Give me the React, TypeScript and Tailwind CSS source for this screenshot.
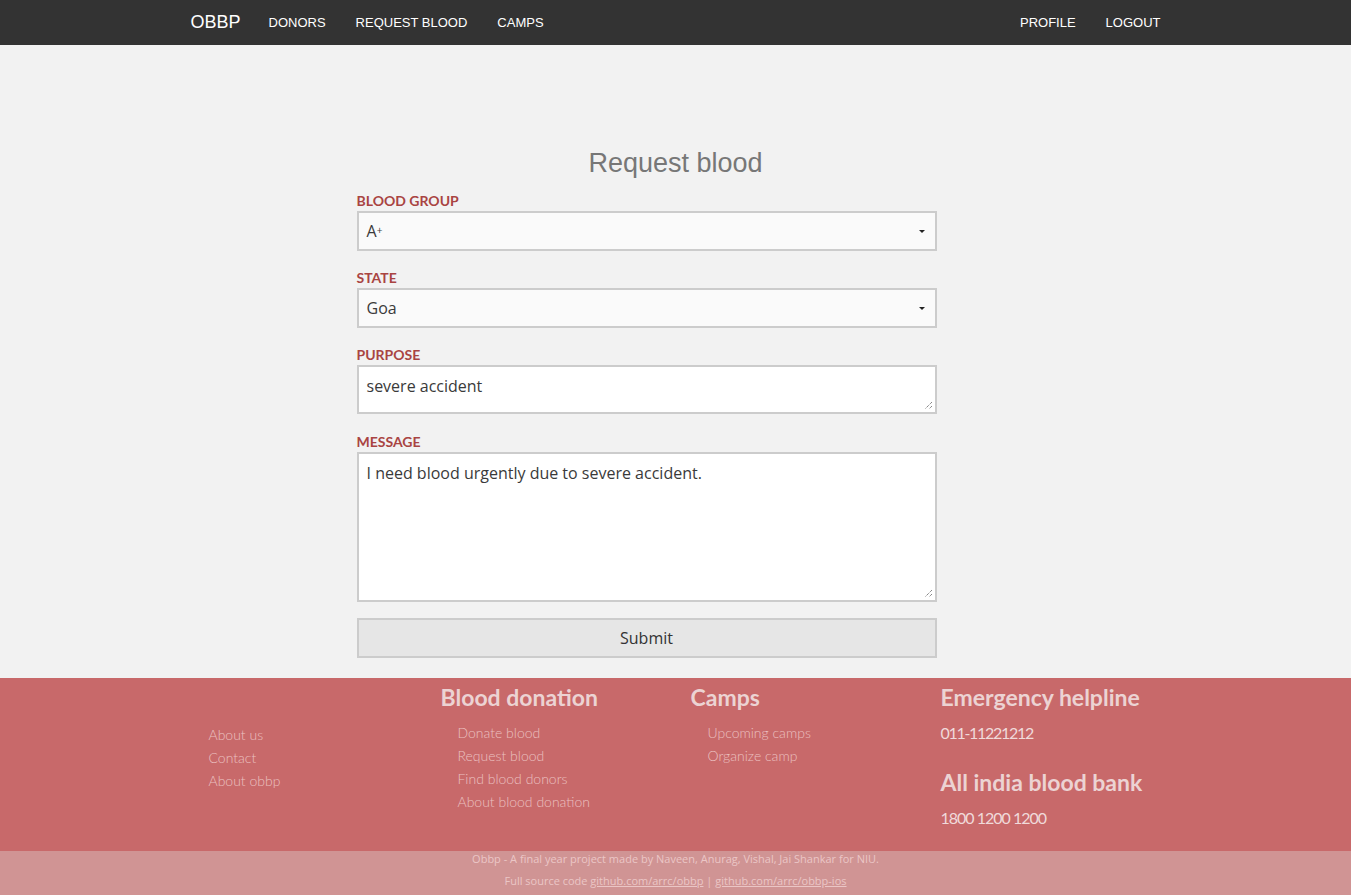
import React from "react";

const navFont = { fontFamily: '"Liberation Sans", Arial, sans-serif' };
const inputFont = { fontFamily: '"Open Sans", sans-serif' };

function Caret() {
  return (
    <svg width="8" height="5" viewBox="0 0 8 5" className="shrink-0">
      <path d="M1 1 L7 1 L4 4 Z" fill="#222" />
    </svg>
  );
}

function Grip() {
  return (
    <svg width="9" height="9" viewBox="0 0 9 9" className="absolute right-[2px] bottom-[2px]">
      <path d="M8 1 L1 8 M8 5 L5 8" stroke="#555" strokeWidth="1" strokeDasharray="1 1" />
    </svg>
  );
}

function Label({ children }: { children: React.ReactNode }) {
  return <label className="text-[14px] font-bold text-[#a94442] leading-[17px] mb-[2px]">{children}</label>;
}

export default function App() {
  return (
    <div className="min-h-screen bg-[#f2f2f2] flex flex-col">
      <nav className="bg-[#333333] h-[45px] w-full" style={navFont}>
        <div className="w-[970px] mx-auto h-full flex items-center justify-between text-white">
          <div className="flex items-center">
            <span className="text-[18px] mr-[28px]">OBBP</span>
            <span className="text-[13px] mr-[30px]">DONORS</span>
            <span className="text-[13px] mr-[30px]">REQUEST BLOOD</span>
            <span className="text-[13px]">CAMPS</span>
          </div>
          <div className="flex items-center">
            <span className="text-[13px] mr-[30px]">PROFILE</span>
            <span className="text-[13px]">LOGOUT</span>
          </div>
        </div>
      </nav>

      <main className="flex-1 pt-[102px] pb-[20px]">
        <div className="w-[970px] mx-auto flex flex-col">
          <h1 className="text-center text-[27px] text-[#777777] leading-[32px] mb-[13px]" style={navFont}>
            Request blood
          </h1>
          <div style={{ fontFamily: 'Lato, sans-serif' }} className="w-[580px] ml-[167px] -translate-x-[1px] flex flex-col">
            <Label>BLOOD GROUP</Label>
            <div className="h-[40px] border-2 border-[#cccccc] bg-[#fafafa] flex items-center justify-between pl-[8px] pr-[9px] mb-[18px]">
              <span className="text-[16px] text-[#3a3a3a] flex items-center" style={inputFont}>A<span className="text-[10px] leading-[14px] -mt-[3px]">+</span></span>
              <Caret />
            </div>
            <Label>STATE</Label>
            <div className="h-[40px] border-2 border-[#cccccc] bg-[#fafafa] flex items-center justify-between pl-[8px] pr-[9px] mb-[18px]">
              <span className="text-[16px] text-[#3a3a3a]" style={inputFont}>Goa</span>
              <Caret />
            </div>
            <Label>PURPOSE</Label>
            <div className="relative h-[49px] border-2 border-[#cccccc] bg-white pl-[8px] pt-[7px] mb-[19px]">
              <span className="text-[16px] text-[#3a3a3a] leading-[20px]" style={inputFont}>severe accident</span>
              <Grip />
            </div>
            <Label>MESSAGE</Label>
            <div className="relative h-[150px] border-2 border-[#cccccc] bg-white pl-[8px] pt-[7px] mb-[16px]">
              <span className="text-[16px] text-[#3a3a3a] leading-[20px]" style={inputFont}>I need blood urgently due to severe accident.</span>
              <Grip />
            </div>
            <div className="h-[40px] border-2 border-[#cccccc] bg-[#e6e6e6] flex items-center justify-center text-[16px] text-[#333]" style={inputFont}>
              Submit
            </div>
          </div>
        </div>
      </main>

      <footer style={{ fontFamily: 'Lato, sans-serif' }}>
        <div className="bg-[#c8696a] h-[173px]">
          <div className="w-[970px] mx-auto grid grid-cols-[250px_250px_250px_220px]">
            <div className="pt-[47px] pl-[18px] flex flex-col gap-[4px]">
              {["About us", "Contact", "About obbp"].map((t) => (
                <span key={t} className="text-[14px] font-light text-[#ebc0c0] leading-[19px]">{t}</span>
              ))}
            </div>
            <div className="pt-[5px]">
              <div className="text-[23px] font-bold text-[#ecd3d3] leading-[29px] mb-[11px]">Blood donation</div>
              <div className="pl-[17px] flex flex-col gap-[4px]">
                {["Donate blood", "Request blood", "Find blood donors", "About blood donation"].map((t) => (
                  <span key={t} className="text-[14px] font-light text-[#ebc0c0] leading-[19px]">{t}</span>
                ))}
              </div>
            </div>
            <div className="pt-[5px]">
              <div className="text-[23px] font-bold text-[#ecd3d3] leading-[29px] mb-[11px]">Camps</div>
              <div className="pl-[17px] flex flex-col gap-[4px]">
                {["Upcoming camps", "Organize camp"].map((t) => (
                  <span key={t} className="text-[14px] font-light text-[#ebc0c0] leading-[19px]">{t}</span>
                ))}
              </div>
            </div>
            <div className="pt-[5px]">
              <div className="text-[23px] font-bold text-[#ecd3d3] leading-[29px] mb-[11px] whitespace-nowrap">Emergency helpline</div>
              <div className="text-[16px] text-[#f0dada] leading-[20px] mb-[25px] tracking-[-1.3px]">011-11221212</div>
              <div className="text-[23px] font-bold text-[#ecd3d3] leading-[29px] mb-[11px] whitespace-nowrap">All india blood bank</div>
              <div className="text-[16px] text-[#f0dada] leading-[20px] tracking-[-1px]">1800 1200 1200</div>
            </div>
          </div>
        </div>
        <div className="bg-[#d09494] h-[44px] flex flex-col items-center pt-[1px] text-[11px] text-[#ebc6c6] leading-[14px] gap-[8px]" style={inputFont}>
          <span>Obbp - A final year project made by Naveen, Anurag, Vishal, Jai Shankar for NIU.</span>
          <span>
            Full source code <span className="underline">github.com/arrc/obbp</span> | <span className="underline">github.com/arrc/obbp-ios</span>
          </span>
        </div>
      </footer>
    </div>
  );
}
